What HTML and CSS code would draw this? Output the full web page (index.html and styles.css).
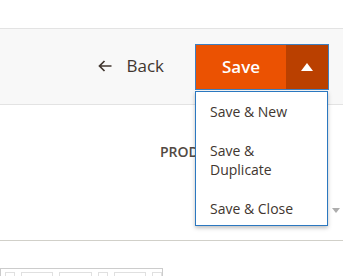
FILE: index.html
```html
<!DOCTYPE html>
<html>
<head>
<meta charset="utf-8">
<link rel="stylesheet" href="styles.css">
</head>
<body>
<div class="page">
  <div class="top"></div>
  <div class="actions-bar">
    <a class="back" href="#">
      <svg class="back-icon" width="14" height="12" viewBox="0 0 14 12"><path d="M13.5 6H1.5M6.5 1L1.5 6l5 5" fill="none" stroke="#41362f" stroke-width="1.7"/></svg>
      <span>Back</span>
    </a>
    <div class="split">
      <button class="save-main">Save</button>
      <button class="save-toggle"><span class="tri-up"></span></button>
      <ul class="menu">
        <li>Save &amp; New</li>
        <li>Save &amp;<br>Duplicate</li>
        <li>Save &amp; Close</li>
      </ul>
    </div>
  </div>
  <div class="content">
    <div class="field-label"><span class="label-clip">PRODUCT</span></div>
    <div class="select-row"><span class="tri-down"></span></div>
    <div class="divider"></div>
    <div class="editor">
      <div class="toolbar">
        <span class="tb tb-s"></span>
        <span class="tb tb-m"></span>
        <span class="tb tb-m"></span>
        <span class="tb tb-s"></span>
        <span class="tb tb-m"></span>
        <span class="tb tb-s"></span>
      </div>
    </div>
  </div>
</div>
</body>
</html>
```

FILE: styles.css
```css
* { box-sizing: border-box; }
html, body { margin: 0; padding: 0; background: #fff; }
body {
  font-family: "Open Sans", "Liberation Sans", sans-serif;
  color: #41362f;
  overflow: hidden;
  width: 348px;
  height: 276px;
}
.top { height: 28px; }
.actions-bar {
  width: 343px;
  height: 77px;
  background: #f8f8f8;
  border-top: 1px solid #e3e3e3;
  border-bottom: 1px solid #e3e3e3;
  display: flex;
  justify-content: flex-end;
  align-items: center;
  padding-right: 14px;
  position: relative;
  z-index: 2;
}
.back {
  display: flex;
  align-items: center;
  gap: 14px;
  text-decoration: none;
  color: #41362f;
  font-size: 17px;
  margin-right: 31px;
  margin-bottom: 3px;
}
.back-icon { display: block; margin-top: 1px; }
.split {
  position: relative;
  display: flex;
  height: 46px;
  border: 1px solid #3f7fc0;
  margin-top: 1px;
}
.split button {
  border: 0;
  margin: 0;
  font-family: inherit;
  cursor: pointer;
}
.save-main {
  width: 90px;
  background: #eb5202;
  color: #fff;
  font-size: 17px;
  font-weight: 600;
  padding: 0 0 1px 0;
}
.save-toggle {
  width: 42px;
  background: #ba4000;
  display: flex;
  align-items: center;
  justify-content: center;
  padding: 0;
}
.tri-up {
  width: 0; height: 0;
  border-left: 6.5px solid transparent;
  border-right: 6.5px solid transparent;
  border-bottom: 8px solid #fff;
}
.menu {
  position: absolute;
  top: 46px;
  left: -1px;
  width: 133px;
  margin: 0;
  padding: 0;
  list-style: none;
  background: #fff;
  border: 1px solid #2b78c0;
  box-shadow: 0 2px 4px rgba(0,0,0,0.25);
  font-size: 14px;
  line-height: 19px;
  color: #41362f;
}
.menu li {
  padding: 10px 14px 10px 14px;
}
.menu li:last-child { padding-bottom: 7px; }
.content { width: 343px; }
.field-label {
  padding-left: 160px;
  margin-top: 37px;
  font-size: 14px;
  line-height: 19px;
  font-weight: 600;
  color: #514943;
}
.label-clip {
  display: inline-block;
  vertical-align: top;
  width: 35px;
  overflow: hidden;
  white-space: nowrap;
}
.select-row {
  display: flex;
  justify-content: flex-end;
  padding-right: 3px;
  margin-top: 47px;
  height: 6px;
}
.tri-down {
  width: 0; height: 0;
  border-left: 4px solid transparent;
  border-right: 4px solid transparent;
  border-top: 5px solid #adadad;
}
.divider {
  margin-top: 26px;
  border-top: 1px solid #d1d0c9;
}
.editor {
  margin-top: 27px;
  width: 163px;
  height: 30px;
  border: 1px solid #cccccc;
  padding: 3px 0 0 4px;
}
.toolbar { display: flex; gap: 6px; }
.tb {
  height: 20px;
  border: 1px solid #e0e0e0;
}
.tb-s { width: 12px; }
.tb-m { width: 40px; }
```
